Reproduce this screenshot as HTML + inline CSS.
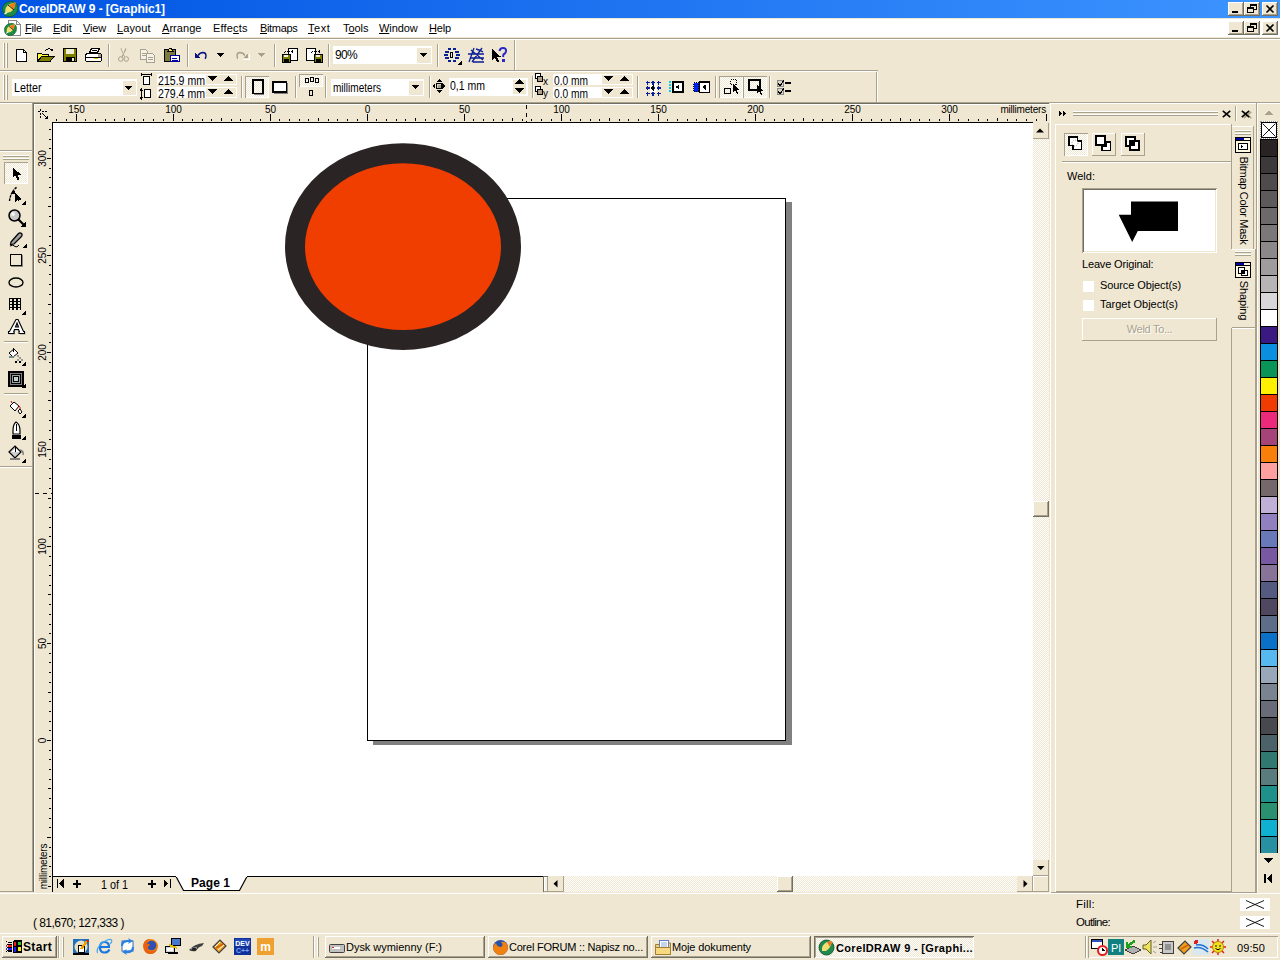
<!DOCTYPE html>
<html><head><meta charset="utf-8">
<style>
*{box-sizing:border-box;margin:0;padding:0}
html,body{width:1280px;height:960px;overflow:hidden;background:#EFE7D2;font-family:"Liberation Sans",sans-serif;font-size:11px;color:#000}
body{position:relative}
.a{position:absolute}
.t{position:absolute;white-space:nowrap;line-height:13px}
svg.a{overflow:visible}
.ul{text-decoration:underline;text-underline-offset:1px}
</style></head><body>

<div class="a" style="left:0px;top:0px;width:1280px;height:18px;background:linear-gradient(to right,#0054E3,#3D95FF);"></div>
<div class="t" style="left:19px;top:2px;color:#fff;font-weight:bold;font-size:12px;line-height:14px;letter-spacing:-0.085px">CorelDRAW 9 - [Graphic1]</div>
<div class="a" style="left:1228px;top:2px;width:16px;height:14px;background:#EFE7D2;box-shadow:inset -1px -1px #716F64,inset 1px 1px #fff,inset -2px -2px #A9A18B;"></div>
<div class="a" style="left:1232px;top:11px;width:6px;height:2px;background:#000;"></div>
<div class="a" style="left:1244px;top:2px;width:16px;height:14px;background:#EFE7D2;box-shadow:inset -1px -1px #716F64,inset 1px 1px #fff,inset -2px -2px #A9A18B;"></div>
<svg class="a" style="left:1244px;top:2px;" width="16" height="14" viewBox="0 0 16 14" shape-rendering="crispEdges"><rect x="6.5" y="2.5" width="6" height="5" fill="none" stroke="#000"/><rect x="6" y="2" width="7" height="2" fill="#000"/><rect x="3.5" y="5.5" width="6" height="5" fill="#EFE7D2" stroke="#000"/><rect x="3" y="5" width="7" height="2" fill="#000"/></svg>
<div class="a" style="left:1262px;top:2px;width:16px;height:14px;background:#EFE7D2;box-shadow:inset -1px -1px #716F64,inset 1px 1px #fff,inset -2px -2px #A9A18B;"></div>
<svg class="a" style="left:1262px;top:2px;" width="16" height="14" viewBox="0 0 16 14" shape-rendering="crispEdges"><path d="M4.5 3.5 L11.5 10.5 M11.5 3.5 L4.5 10.5" stroke="#000" stroke-width="1.6" fill="none" shape-rendering="auto"/></svg>
<div class="a" style="left:0px;top:18px;width:1280px;height:1px;background:#EFE7D2;"></div>
<div class="a" style="left:0px;top:19px;width:1280px;height:18px;background:#fff;"></div>
<div class="a" style="left:0px;top:37px;width:1280px;height:1px;background:#EFE7D2;"></div>
<div class="a" style="left:0px;top:38px;width:1280px;height:1px;background:#A9A18B;"></div>
<div class="a" style="left:0px;top:39px;width:1280px;height:1px;background:#fff;"></div>
<div class="a" style="left:1228px;top:21px;width:16px;height:14px;background:#EFE7D2;box-shadow:inset -1px -1px #716F64,inset 1px 1px #fff,inset -2px -2px #A9A18B;"></div>
<div class="a" style="left:1232px;top:30px;width:6px;height:2px;background:#000;"></div>
<div class="a" style="left:1244px;top:21px;width:16px;height:14px;background:#EFE7D2;box-shadow:inset -1px -1px #716F64,inset 1px 1px #fff,inset -2px -2px #A9A18B;"></div>
<svg class="a" style="left:1244px;top:21px;" width="16" height="14" viewBox="0 0 16 14" shape-rendering="crispEdges"><rect x="6.5" y="2.5" width="6" height="5" fill="none" stroke="#000"/><rect x="6" y="2" width="7" height="2" fill="#000"/><rect x="3.5" y="5.5" width="6" height="5" fill="#EFE7D2" stroke="#000"/><rect x="3" y="5" width="7" height="2" fill="#000"/></svg>
<div class="a" style="left:1262px;top:21px;width:16px;height:14px;background:#EFE7D2;box-shadow:inset -1px -1px #716F64,inset 1px 1px #fff,inset -2px -2px #A9A18B;"></div>
<svg class="a" style="left:1262px;top:21px;" width="16" height="14" viewBox="0 0 16 14" shape-rendering="crispEdges"><path d="M4.5 3.5 L11.5 10.5 M11.5 3.5 L4.5 10.5" stroke="#000" stroke-width="1.6" fill="none" shape-rendering="auto"/></svg>
<div class="t" style="left:25px;top:22px;;letter-spacing:-0.163px"><span class="ul">F</span>ile</div>
<div class="t" style="left:53px;top:22px;;letter-spacing:-0.092px"><span class="ul">E</span>dit</div>
<div class="t" style="left:83px;top:22px;;letter-spacing:-0.139px"><span class="ul">V</span>iew</div>
<div class="t" style="left:117px;top:22px;;letter-spacing:0.109px"><span class="ul">L</span>ayout</div>
<div class="t" style="left:162px;top:22px;;letter-spacing:0.051px"><span class="ul">A</span>rrange</div>
<div class="t" style="left:213px;top:22px;;letter-spacing:0.180px">Effe<span class="ul">c</span>ts</div>
<div class="t" style="left:260px;top:22px;;letter-spacing:-0.336px"><span class="ul">B</span>itmaps</div>
<div class="t" style="left:308px;top:22px;;letter-spacing:0.553px"><span class="ul">T</span>ext</div>
<div class="t" style="left:343px;top:22px;;letter-spacing:-0.077px">T<span class="ul">o</span>ols</div>
<div class="t" style="left:379px;top:22px;;letter-spacing:-0.073px"><span class="ul">W</span>indow</div>
<div class="t" style="left:429px;top:22px;;letter-spacing:-0.210px"><span class="ul">H</span>elp</div>
<svg class="a" style="left:2px;top:1px;" width="17" height="17" viewBox="0 0 17 17" shape-rendering="crispEdges"><g shape-rendering="auto"><path d="M8 0.5Q14 0 15.5 5Q16.5 11 12 14.5Q8 16.5 4 15Q0.5 13 0.5 8Q1 2 8 0.5Z" fill="#1E8C48" stroke="#0C5A28" stroke-width="0.8"/><path d="M3.5 12Q2.5 7 6 4Q9 2 13.5 1.5Q13 6 11 9Q8 12.5 3.5 12Z" fill="#F2E070"/><path d="M7 4Q10 2 13.5 1.5Q13 6 11 9Q10 6 7 4Z" fill="#F07818"/><path d="M6 4L12 9" stroke="#201000" stroke-width="0.9"/><path d="M2.5 13L5 11.5" stroke="#fff" stroke-width="1.2"/></g></svg>
<svg class="a" style="left:8px;top:20px;" width="13" height="16" viewBox="0 0 13 16" shape-rendering="crispEdges"><path d="M0.5 0.5H8.5L12.5 4.5V15.5H0.5Z" fill="#fff" stroke="#888"/><path d="M8.5 0.5V4.5H12.5" fill="none" stroke="#888"/></svg>
<svg class="a" style="left:4px;top:23px;" width="13" height="13" viewBox="0 0 13 13" shape-rendering="crispEdges"><g transform="scale(0.8)"><g shape-rendering="auto"><path d="M8 0.5Q14 0 15.5 5Q16.5 11 12 14.5Q8 16.5 4 15Q0.5 13 0.5 8Q1 2 8 0.5Z" fill="#1E8C48" stroke="#0C5A28" stroke-width="0.8"/><path d="M3.5 12Q2.5 7 6 4Q9 2 13.5 1.5Q13 6 11 9Q8 12.5 3.5 12Z" fill="#F2E070"/><path d="M7 4Q10 2 13.5 1.5Q13 6 11 9Q10 6 7 4Z" fill="#F07818"/><path d="M6 4L12 9" stroke="#201000" stroke-width="0.9"/><path d="M2.5 13L5 11.5" stroke="#fff" stroke-width="1.2"/></g></g></svg>
<div class="a" style="left:0px;top:70px;width:878px;height:1px;background:#A9A18B;"></div>
<div class="a" style="left:0px;top:71px;width:877px;height:1px;background:#fff;"></div>
<div class="a" style="left:0px;top:102px;width:1280px;height:1px;background:#A9A18B;"></div>
<div class="a" style="left:0px;top:103px;width:33px;height:1px;background:#fff;"></div>
<div class="a" style="left:3px;top:43px;width:1px;height:25px;background:#fff;"></div>
<div class="a" style="left:4px;top:43px;width:1px;height:25px;background:#A9A18B;"></div>
<div class="a" style="left:6px;top:43px;width:1px;height:25px;background:#fff;"></div>
<div class="a" style="left:7px;top:43px;width:1px;height:25px;background:#A9A18B;"></div>
<div class="a" style="left:3px;top:75px;width:1px;height:25px;background:#fff;"></div>
<div class="a" style="left:4px;top:75px;width:1px;height:25px;background:#A9A18B;"></div>
<div class="a" style="left:6px;top:75px;width:1px;height:25px;background:#fff;"></div>
<div class="a" style="left:7px;top:75px;width:1px;height:25px;background:#A9A18B;"></div>
<div class="a" style="left:514px;top:40px;width:1px;height:30px;background:#A9A18B;"></div>
<div class="a" style="left:515px;top:40px;width:1px;height:30px;background:#fff;"></div>
<div class="a" style="left:876px;top:72px;width:1px;height:30px;background:#A9A18B;"></div>
<div class="a" style="left:877px;top:72px;width:1px;height:30px;background:#fff;"></div>
<svg class="a" style="left:16px;top:49px;" width="12" height="14" viewBox="0 0 12 14" shape-rendering="crispEdges"><path d="M0.5 0.5H7.5L10.5 3.5V12.5H0.5Z" fill="#fff" stroke="#000"/><path d="M7.5 0.5V3.5H10.5" fill="none" stroke="#000"/></svg>
<svg class="a" style="left:37px;top:47px;" width="18" height="16" viewBox="0 0 18 16" shape-rendering="crispEdges"><path d="M8 4 Q11 0 15 3" fill="none" stroke="#000"/><path d="M13 4H16V1Z" fill="#000"/><path d="M0.5 6.5H4.5L5.5 7.5H11.5V14.5H0.5Z" fill="#FFFF40" stroke="#000"/><path d="M0.5 14.5L4.5 9.5H17L13 14.5Z" fill="#808000" stroke="#000"/></svg>
<svg class="a" style="left:63px;top:48px;" width="15" height="15" viewBox="0 0 15 15" shape-rendering="crispEdges"><rect x="0.5" y="0.5" width="13" height="13" fill="#808000" stroke="#000"/><rect x="3" y="1" width="8" height="5" fill="#F0EED8"/><rect x="3" y="9" width="9" height="5" fill="#000"/><rect x="9" y="10" width="2" height="3" fill="#F0EED8"/></svg>
<svg class="a" style="left:85px;top:48px;" width="18" height="15" viewBox="0 0 18 15" shape-rendering="crispEdges"><path d="M4.5 4.5L6.5 0.5H14.5L12.5 4.5Z" fill="#fff" stroke="#000"/><path d="M7 2H12" stroke="#000"/><path d="M1.5 5.5H15.5L16.5 7.5V12.5L15.5 13.5H1.5L0.5 12.5V7.5Z" fill="#fff" stroke="#000"/><path d="M1 9.5H16" stroke="#000"/><rect x="9" y="10" width="4" height="1" fill="#E0C000"/><rect x="13" y="6" width="3" height="3" fill="#A9A18B"/></svg>
<div class="a" style="left:108px;top:44px;width:1px;height:23px;background:#A9A18B;"></div>
<div class="a" style="left:109px;top:44px;width:1px;height:23px;background:#fff;"></div>
<svg class="a" style="left:118px;top:48px;" width="12" height="15" viewBox="0 0 12 15" shape-rendering="crispEdges"><path d="M3 0.5L7 9M8 0.5L4 9" stroke="#A9A18B" fill="none" stroke-width="1.2" shape-rendering="auto"/><circle cx="2.8" cy="11" r="2.3" fill="none" stroke="#A9A18B" shape-rendering="auto"/><circle cx="8.2" cy="11" r="2.3" fill="none" stroke="#A9A18B" shape-rendering="auto"/><path d="M4 1L7.5 9" stroke="#fff" fill="none" shape-rendering="auto" opacity="0.6"/></svg>
<svg class="a" style="left:140px;top:49px;" width="17" height="14" viewBox="0 0 17 14" shape-rendering="crispEdges"><path d="M0.5 0.5H5.5L7.5 2.5V10.5H0.5Z" fill="#F4F2E8" stroke="#A9A18B"/><path d="M6.5 4.5H12.5L14.5 6.5V13.5H6.5Z" fill="#F4F2E8" stroke="#A9A18B"/><path d="M2 4H6M2 6H6M8 8H13M8 10H13" stroke="#A9A18B"/></svg>
<svg class="a" style="left:164px;top:48px;" width="17" height="15" viewBox="0 0 17 15" shape-rendering="crispEdges"><rect x="0.5" y="1.5" width="11" height="12" fill="#7F7A40" stroke="#000"/><path d="M3.5 3.5L5.5 0.5H7L9 3.5Z" fill="#FFE060" stroke="#000"/><rect x="6.5" y="7.5" width="9" height="6" fill="#fff" stroke="#0000A0"/><path d="M8 10H13M8 12H14" stroke="#0000A0"/></svg>
<div class="a" style="left:187px;top:44px;width:1px;height:23px;background:#A9A18B;"></div>
<div class="a" style="left:188px;top:44px;width:1px;height:23px;background:#fff;"></div>
<svg class="a" style="left:194px;top:51px;" width="14" height="9" viewBox="0 0 14 9" shape-rendering="crispEdges"><path d="M4 4.5 Q6 1.5 9 1.5 Q12 1.8 12 4.5 Q12 6.5 11 7.8" fill="none" stroke="#0A1480" stroke-width="1.4" shape-rendering="auto"/><path d="M1 2V7H6Z" fill="#0A1480"/></svg>
<svg class="a" style="left:217px;top:53px;" width="8" height="5" viewBox="0 0 8 5" shape-rendering="crispEdges"><path d="M0 0H7L3.5 4Z" fill="#000"/></svg>
<svg class="a" style="left:235px;top:51px;" width="15" height="10" viewBox="0 0 15 10" shape-rendering="crispEdges"><path d="M10 4.5 Q8 1.5 5 1.5 Q2 1.8 2 4.5 Q2 6.5 3 7.8" fill="none" stroke="#A9A18B" stroke-width="1.4" shape-rendering="auto"/><path d="M3.5 8.5Q3 7.5 3 6.5" stroke="#fff" stroke-width="1" fill="none"/><path d="M13 2V7H8Z" fill="#A9A18B"/><path d="M8 8H14V3" stroke="#fff" fill="none"/></svg>
<svg class="a" style="left:258px;top:53px;" width="8" height="5" viewBox="0 0 8 5" shape-rendering="crispEdges"><path d="M0 0H7L3.5 4Z" fill="#A9A18B"/></svg>
<div class="a" style="left:274px;top:44px;width:1px;height:23px;background:#A9A18B;"></div>
<div class="a" style="left:275px;top:44px;width:1px;height:23px;background:#fff;"></div>
<svg class="a" style="left:281px;top:47px;" width="18" height="17" viewBox="0 0 18 17" shape-rendering="crispEdges"><rect x="7.5" y="1.5" width="9" height="12" fill="#fff" stroke="#000"/><path d="M3 6V4.5H9" fill="none" stroke="#000" stroke-dasharray="1 1"/><path d="M9 5L12 3V6Z" fill="#000"/><rect x="1" y="7.5" width="8.5" height="8" fill="#808000" stroke="#000"/><rect x="3" y="8" width="4" height="2" fill="#F0EED8"/><rect x="3" y="12" width="5" height="4" fill="#000"/></svg>
<svg class="a" style="left:305px;top:47px;" width="18" height="17" viewBox="0 0 18 17" shape-rendering="crispEdges"><rect x="1.5" y="1.5" width="9" height="12" fill="#fff" stroke="#000"/><path d="M6 6V4.5H12" fill="none" stroke="#000" stroke-dasharray="1 1"/><path d="M12 5L15 3V6Z" fill="#000"/><rect x="9" y="7.5" width="8" height="8" fill="#808000" stroke="#000"/><rect x="11" y="8" width="4" height="2" fill="#F0EED8"/><rect x="11" y="12" width="5" height="4" fill="#000"/></svg>
<div class="a" style="left:328px;top:44px;width:1px;height:23px;background:#A9A18B;"></div>
<div class="a" style="left:329px;top:44px;width:1px;height:23px;background:#fff;"></div>
<div class="a" style="left:333px;top:46px;width:99px;height:18px;background:#fff;"></div>
<div class="a" style="left:417px;top:48px;width:14px;height:15px;background:#EFE7D2;"></div>
<svg class="a" style="left:420px;top:53px;" width="8" height="5" viewBox="0 0 8 5" shape-rendering="crispEdges"><path d="M0 0H7L3.5 4Z" fill="#000"/></svg>
<div class="t" style="left:335px;top:49px;font-size:12px;letter-spacing:-0.677px">90%</div>
<div class="a" style="left:437px;top:44px;width:1px;height:23px;background:#A9A18B;"></div>
<div class="a" style="left:438px;top:44px;width:1px;height:23px;background:#fff;"></div>
<svg class="a" style="left:444px;top:48px;" width="19" height="17" viewBox="0 0 19 17" shape-rendering="crispEdges"><g fill="#0A1E96"><rect x="4" y="0" width="3" height="2"/><rect x="9" y="0" width="3" height="2"/><rect x="1" y="3" width="4" height="2"/><rect x="11" y="3" width="4" height="2"/><rect x="0" y="6" width="4" height="2"/><rect x="12" y="6" width="4" height="2"/><rect x="1" y="9" width="4" height="2"/><rect x="11" y="9" width="4" height="2"/><rect x="4" y="12" width="3" height="2"/><rect x="9" y="12" width="3" height="2"/></g><path d="M6 5 Q8 3 9 5 L8 10 Q6 10 6 8Z" fill="none" stroke="#000"/><path d="M18 12V17H13Z" fill="#000"/></svg>
<svg class="a" style="left:468px;top:48px;" width="17" height="15" viewBox="0 0 17 15" shape-rendering="crispEdges"><g stroke="#0A1E96" fill="none" stroke-width="1.3" shape-rendering="auto"><path d="M0 6H16M2 10H16M5 14H16M6 0L1 14M14 0L4 14M3 2L15 12M8 1Q12 2 15 4"/></g></svg>
<svg class="a" style="left:491px;top:47px;" width="18" height="17" viewBox="0 0 18 17" shape-rendering="crispEdges"><path d="M0.5 1.5V13.5L3.5 10.5L6 15.5L8 14.5L5.5 9.5H9.5Z" fill="#000"/><path d="M8.5 4 Q9 1 12 1 Q15.5 1 15 4.5 Q14.5 6.5 12.5 7.5 L12 10" fill="none" stroke="#2828C8" stroke-width="2" shape-rendering="auto"/><rect x="11" y="12" width="2.5" height="2.5" fill="#2828C8"/></svg>
<div class="a" style="left:12px;top:79px;width:125px;height:17px;background:#fff;"></div>
<div class="a" style="left:123px;top:81px;width:13px;height:14px;background:#EFE7D2;"></div>
<svg class="a" style="left:125px;top:86px;" width="8" height="5" viewBox="0 0 8 5" shape-rendering="crispEdges"><path d="M0 0H7L3.5 4Z" fill="#000"/></svg>
<div class="t" style="left:14px;top:82px;font-size:12px;transform-origin:0 0;transform:scaleX(0.8961)">Letter</div>
<svg class="a" style="left:140px;top:72px;" width="13" height="28" viewBox="0 0 13 28" shape-rendering="crispEdges"><path d="M1.5 0.5V3.5M11.5 0.5V3.5M1 2H12" stroke="#000" fill="none"/><rect x="3.5" y="4.5" width="6" height="8" fill="#fff" stroke="#000" stroke-width="1.5"/><path d="M1.5 18V26" stroke="#000" fill="none"/><path d="M-0.5 19H3.5L1.5 16Z M-0.5 25H3.5L1.5 28Z" fill="#000"/><rect x="4.5" y="17.5" width="6" height="8" fill="#fff" stroke="#000" stroke-width="1.5"/></svg>
<div class="a" style="left:157px;top:74px;width:80px;height:11px;background:#fff;"></div>
<div class="a" style="left:206px;top:75px;width:30px;height:9px;background:#EFE7D2;"></div>
<div class="t" style="left:158px;top:75px;font-size:12px;line-height:13px;transform-origin:0 0;transform:scaleX(0.8808)">215.9 mm</div>
<svg class="a" style="left:208px;top:76px;" width="10" height="5" viewBox="0 0 10 5" shape-rendering="crispEdges"><path d="M0 0H9L4.5 5Z" fill="#000"/></svg>
<svg class="a" style="left:224px;top:76px;" width="10" height="5" viewBox="0 0 10 5" shape-rendering="crispEdges"><path d="M0 5H9L4.5 0Z" fill="#000"/></svg>
<div class="a" style="left:157px;top:87px;width:80px;height:11px;background:#fff;"></div>
<div class="a" style="left:206px;top:88px;width:30px;height:9px;background:#EFE7D2;"></div>
<div class="t" style="left:158px;top:88px;font-size:12px;line-height:13px;transform-origin:0 0;transform:scaleX(0.8808)">279.4 mm</div>
<svg class="a" style="left:208px;top:89px;" width="10" height="5" viewBox="0 0 10 5" shape-rendering="crispEdges"><path d="M0 0H9L4.5 5Z" fill="#000"/></svg>
<svg class="a" style="left:224px;top:89px;" width="10" height="5" viewBox="0 0 10 5" shape-rendering="crispEdges"><path d="M0 5H9L4.5 0Z" fill="#000"/></svg>
<div class="a" style="left:241px;top:76px;width:1px;height:22px;background:#A9A18B;"></div>
<div class="a" style="left:242px;top:76px;width:1px;height:22px;background:#fff;"></div>
<div class="a" style="left:245px;top:76px;width:24px;height:22px;background-color:#fff;background-image:conic-gradient(#EFE7D2 25%,#fff 0 50%,#EFE7D2 0 75%,#fff 0);background-size:2px 2px;box-shadow:inset 1px 1px #A9A18B,inset -1px -1px #fff"></div>
<svg class="a" style="left:252px;top:79px;" width="13" height="17" viewBox="0 0 13 17" shape-rendering="crispEdges"><path d="M11.5 2V15.5H2" fill="none" stroke="#808080" stroke-width="1"/><rect x="0.75" y="0.75" width="10" height="13.5" fill="none" stroke="#000" stroke-width="1.5"/></svg>
<svg class="a" style="left:272px;top:81px;" width="17" height="13" viewBox="0 0 17 13" shape-rendering="crispEdges"><path d="M15.5 2V12.5H2" fill="none" stroke="#808080" stroke-width="1"/><rect x="0.75" y="0.75" width="13.5" height="10" fill="#fff" stroke="#000" stroke-width="1.5"/></svg>
<div class="a" style="left:295px;top:76px;width:1px;height:22px;background:#A9A18B;"></div>
<div class="a" style="left:296px;top:76px;width:1px;height:22px;background:#fff;"></div>
<div class="a" style="left:299px;top:74px;width:24px;height:13px;background-color:#fff;background-image:conic-gradient(#EFE7D2 25%,#fff 0 50%,#EFE7D2 0 75%,#fff 0);background-size:2px 2px;box-shadow:inset 1px 1px #A9A18B,inset -1px -1px #fff"></div>
<svg class="a" style="left:305px;top:77px;" width="15" height="8" viewBox="0 0 15 8" shape-rendering="crispEdges"><rect x="0.5" y="1.5" width="3" height="4" fill="none" stroke="#000"/><rect x="5.5" y="0.5" width="3" height="4" fill="none" stroke="#000"/><rect x="10.5" y="1.5" width="3" height="4" fill="none" stroke="#000"/></svg>
<svg class="a" style="left:309px;top:90px;" width="5" height="6" viewBox="0 0 5 6" shape-rendering="crispEdges"><rect x="0.5" y="0.5" width="3" height="4.5" fill="none" stroke="#000"/></svg>
<div class="a" style="left:325px;top:76px;width:1px;height:22px;background:#A9A18B;"></div>
<div class="a" style="left:326px;top:76px;width:1px;height:22px;background:#fff;"></div>
<div class="a" style="left:331px;top:79px;width:93px;height:17px;background:#fff;"></div>
<div class="a" style="left:409px;top:81px;width:14px;height:14px;background:#EFE7D2;"></div>
<svg class="a" style="left:412px;top:85px;" width="8" height="4" viewBox="0 0 8 4" shape-rendering="crispEdges"><path d="M0 0H7L3.5 4Z" fill="#000"/></svg>
<div class="t" style="left:333px;top:82px;font-size:12px;transform-origin:0 0;transform:scaleX(0.8371)">millimeters</div>
<div class="a" style="left:429px;top:76px;width:1px;height:22px;background:#A9A18B;"></div>
<div class="a" style="left:430px;top:76px;width:1px;height:22px;background:#fff;"></div>
<svg class="a" style="left:432px;top:79px;" width="14" height="15" viewBox="0 0 14 15" shape-rendering="crispEdges"><path d="M7 0L10 3H4Z M7 14L10 11H4Z M0 7L3 4V10Z M13 7L10 4V10Z" fill="#000"/><rect x="4.5" y="4.5" width="5" height="5" fill="#D8D4C0" stroke="#000"/><rect x="6" y="6" width="3" height="3" fill="#A9A18B"/></svg>
<div class="a" style="left:449px;top:78px;width:79px;height:18px;background:#fff;"></div>
<div class="a" style="left:513px;top:80px;width:13px;height:14px;background:#EFE7D2;"></div>
<div class="t" style="left:450px;top:79px;font-size:12px;line-height:14px;transform-origin:0 0;transform:scaleX(0.8747)">0,1 mm</div>
<svg class="a" style="left:515px;top:79px;" width="10" height="6" viewBox="0 0 10 6" shape-rendering="crispEdges"><path d="M0 5H9L4.5 0Z" fill="#000"/></svg>
<svg class="a" style="left:515px;top:88px;" width="10" height="6" viewBox="0 0 10 6" shape-rendering="crispEdges"><path d="M0 0H9L4.5 5Z" fill="#000"/></svg>
<div class="a" style="left:532px;top:76px;width:1px;height:22px;background:#A9A18B;"></div>
<div class="a" style="left:533px;top:76px;width:1px;height:22px;background:#fff;"></div>
<svg class="a" style="left:535px;top:73px;" width="14" height="13" viewBox="0 0 14 13" shape-rendering="crispEdges"><rect x="0.5" y="0.5" width="5" height="5" fill="#fff" stroke="#000"/><rect x="2.5" y="3" width="5" height="5" fill="#A9A18B" stroke="#000"/></svg>
<div class="t" style="left:543px;top:76px;font-size:10px;line-height:11px">x</div>
<div class="a" style="left:553px;top:74px;width:80px;height:11px;background:#fff;"></div>
<div class="a" style="left:602px;top:75px;width:30px;height:9px;background:#EFE7D2;"></div>
<div class="t" style="left:554px;top:75px;font-size:12px;line-height:13px;transform-origin:0 0;transform:scaleX(0.8497)">0.0 mm</div>
<svg class="a" style="left:604px;top:76px;" width="10" height="5" viewBox="0 0 10 5" shape-rendering="crispEdges"><path d="M0 0H9L4.5 5Z" fill="#000"/></svg>
<svg class="a" style="left:620px;top:76px;" width="10" height="5" viewBox="0 0 10 5" shape-rendering="crispEdges"><path d="M0 5H9L4.5 0Z" fill="#000"/></svg>
<svg class="a" style="left:535px;top:86px;" width="14" height="13" viewBox="0 0 14 13" shape-rendering="crispEdges"><rect x="0.5" y="0.5" width="5" height="5" fill="#fff" stroke="#000"/><rect x="2.5" y="3" width="5" height="5" fill="#A9A18B" stroke="#000"/></svg>
<div class="t" style="left:543px;top:88px;font-size:10px;line-height:11px">y</div>
<div class="a" style="left:553px;top:87px;width:80px;height:11px;background:#fff;"></div>
<div class="a" style="left:602px;top:88px;width:30px;height:9px;background:#EFE7D2;"></div>
<div class="t" style="left:554px;top:88px;font-size:12px;line-height:13px;transform-origin:0 0;transform:scaleX(0.8497)">0.0 mm</div>
<svg class="a" style="left:604px;top:89px;" width="10" height="5" viewBox="0 0 10 5" shape-rendering="crispEdges"><path d="M0 0H9L4.5 5Z" fill="#000"/></svg>
<svg class="a" style="left:620px;top:89px;" width="10" height="5" viewBox="0 0 10 5" shape-rendering="crispEdges"><path d="M0 5H9L4.5 0Z" fill="#000"/></svg>
<div class="a" style="left:637px;top:76px;width:1px;height:22px;background:#A9A18B;"></div>
<div class="a" style="left:638px;top:76px;width:1px;height:22px;background:#fff;"></div>
<svg class="a" style="left:645px;top:80px;" width="16" height="16" viewBox="0 0 16 16" shape-rendering="crispEdges"><rect x="5" y="4" width="7" height="8" fill="#fff"/><path d="M2.5 0.5V4.5M0.5 2.5H4.5" stroke="#0A1E96" stroke-width="1.3"/><path d="M2.5 6V10M0.5 8H4.5" stroke="#0A1E96" stroke-width="1.3"/><path d="M2.5 11.5V15.5M0.5 13.5H4.5" stroke="#0A1E96" stroke-width="1.3"/><path d="M8 0.5V4.5M6 2.5H10" stroke="#0A1E96" stroke-width="1.3"/><path d="M8 6V10M6 8H10" stroke="#0A1E96" stroke-width="1.3"/><path d="M8 11.5V15.5M6 13.5H10" stroke="#0A1E96" stroke-width="1.3"/><path d="M13.5 0.5V4.5M11.5 2.5H15.5" stroke="#0A1E96" stroke-width="1.3"/><path d="M13.5 6V10M11.5 8H15.5" stroke="#0A1E96" stroke-width="1.3"/><path d="M13.5 11.5V15.5M11.5 13.5H15.5" stroke="#0A1E96" stroke-width="1.3"/><path d="M5 8L9 5V11Z" fill="#000"/><path d="M7 8L8 7V9Z" fill="#E0E000"/></svg>
<svg class="a" style="left:669px;top:81px;" width="15" height="12" viewBox="0 0 15 12" shape-rendering="crispEdges"><path d="M1 0V12" stroke="#00D0F0" stroke-width="2" stroke-dasharray="2 1"/><rect x="4" y="1" width="10" height="10" fill="#fff" stroke="#000" stroke-width="1.5"/><path d="M6.5 6L10 3.5V8.5Z" fill="#000"/></svg>
<svg class="a" style="left:693px;top:81px;" width="17" height="12" viewBox="0 0 17 12" shape-rendering="crispEdges"><rect x="0.5" y="1.5" width="5" height="9" fill="#0020F0" stroke="#000" stroke-dasharray="1 1"/><rect x="6.5" y="0.75" width="10" height="10.5" fill="#fff" stroke="#000" stroke-width="1.5"/><path d="M9 6L12.5 3.5V8.5Z" fill="#000"/></svg>
<div class="a" style="left:715px;top:76px;width:1px;height:22px;background:#A9A18B;"></div>
<div class="a" style="left:716px;top:76px;width:1px;height:22px;background:#fff;"></div>
<div class="a" style="left:719px;top:76px;width:24px;height:22px;background-color:#fff;background-image:conic-gradient(#EFE7D2 25%,#fff 0 50%,#EFE7D2 0 75%,#fff 0);background-size:2px 2px;box-shadow:inset 1px 1px #A9A18B,inset -1px -1px #fff"></div>
<div class="a" style="left:743px;top:76px;width:24px;height:22px;background-color:#fff;background-image:conic-gradient(#EFE7D2 25%,#fff 0 50%,#EFE7D2 0 75%,#fff 0);background-size:2px 2px;box-shadow:inset 1px 1px #A9A18B,inset -1px -1px #fff"></div>
<svg class="a" style="left:724px;top:79px;" width="16" height="16" viewBox="0 0 16 16" shape-rendering="crispEdges"><rect x="6.5" y="0.5" width="6" height="5" fill="none" stroke="#000" stroke-dasharray="1 1"/><rect x="0.5" y="9.5" width="6" height="5" fill="none" stroke="#000"/><path d="M9 4V13L11 11L13 15L14 14L12.5 10.5H15Z" fill="#000"/></svg>
<svg class="a" style="left:748px;top:79px;" width="16" height="17" viewBox="0 0 16 17" shape-rendering="crispEdges"><rect x="1" y="1" width="11" height="10" fill="none" stroke="#000" stroke-width="1.3"/><path d="M0 0h2v2H0zM11 0h2v2h-2zM0 10h2v2H0z" fill="#000"/><path d="M9 5V14L11 12L13 16L14 15L12.5 11.5H15Z" fill="#000"/></svg>
<div class="a" style="left:769px;top:76px;width:1px;height:22px;background:#A9A18B;"></div>
<div class="a" style="left:770px;top:76px;width:1px;height:22px;background:#fff;"></div>
<svg class="a" style="left:777px;top:80px;" width="15" height="15" viewBox="0 0 15 15" shape-rendering="crispEdges"><rect x="0.5" y="0.5" width="6" height="6" fill="#D8D4C0" stroke="#888"/><rect x="0.5" y="8.5" width="6" height="6" fill="#D8D4C0" stroke="#888"/><path d="M1 3L3 6L7 0M1 11L3 14L7 8" stroke="#000" fill="none" stroke-width="1.3"/><path d="M8 3H14M8 11H14" stroke="#000" stroke-width="1.5"/></svg>
<div class="a" style="left:32px;top:103px;width:1px;height:789px;background:#A9A18B;"></div>
<div class="a" style="left:0px;top:891px;width:33px;height:1px;background:#A9A18B;"></div>
<div class="a" style="left:0px;top:150px;width:32px;height:1px;background:#A9A18B;"></div>
<div class="a" style="left:0px;top:151px;width:32px;height:1px;background:#fff;"></div>
<div class="a" style="left:0px;top:466px;width:32px;height:1px;background:#A9A18B;"></div>
<div class="a" style="left:0px;top:467px;width:32px;height:1px;background:#fff;"></div>
<div class="a" style="left:3px;top:155px;width:26px;height:1px;background:#fff;"></div>
<div class="a" style="left:3px;top:156px;width:26px;height:1px;background:#A9A18B;"></div>
<div class="a" style="left:3px;top:158px;width:26px;height:1px;background:#fff;"></div>
<div class="a" style="left:3px;top:159px;width:26px;height:1px;background:#A9A18B;"></div>
<div class="a" style="left:4px;top:162px;width:24px;height:22px;background-color:#fff;background-image:conic-gradient(#EFE7D2 25%,#fff 0 50%,#EFE7D2 0 75%,#fff 0);background-size:2px 2px;box-shadow:inset 1px 1px #A9A18B,inset -1px -1px #fff"></div>
<svg class="a" style="left:12px;top:167px;" width="10" height="14" viewBox="0 0 10 14" shape-rendering="crispEdges"><path d="M0.5 0.5V11L3 8.5L5.5 13L7.5 12L5 7.5H9Z" fill="#000"/></svg>
<svg class="a" style="left:8px;top:186px;" width="20" height="20" viewBox="0 0 20 20" shape-rendering="crispEdges"><path d="M1.5 15 Q2.5 6 9 1" fill="none" stroke="#000" stroke-width="1.4" stroke-dasharray="2.5 0.8" shape-rendering="auto"/><rect x="4" y="5" width="3" height="3" fill="#000"/><path d="M7 7V16L9 14L10.5 15.5H11V13.5H13L13.5 13Z" fill="#000"/><path d="M18 14V19H13Z" fill="#000"/></svg>
<svg class="a" style="left:8px;top:209px;" width="19" height="20" viewBox="0 0 19 20" shape-rendering="crispEdges"><circle cx="6.5" cy="6.5" r="5.5" fill="#C8C8C8" stroke="#000" stroke-width="1.5" shape-rendering="auto"/><circle cx="5" cy="5" r="2" fill="#fff" opacity=".8" shape-rendering="auto"/><path d="M10.5 10.5L16 16" stroke="#000" stroke-width="2.2" shape-rendering="auto"/><path d="M17.5 17.5H12.5L17.5 12.5Z" fill="#000"/></svg>
<svg class="a" style="left:9px;top:232px;" width="19" height="17" viewBox="0 0 19 17" shape-rendering="crispEdges"><path d="M2 10L9 2Q11 0 12.5 1.5Q14 3 12 5L5 12L1.5 12.5Z" fill="#A0A0A0" stroke="#000" stroke-width="1.2" shape-rendering="auto"/><path d="M1 14Q4 12 6 14.5Q8 16 10 13" fill="none" stroke="#000" shape-rendering="auto"/><path d="M18 11V16H13Z" fill="#000"/></svg>
<svg class="a" style="left:10px;top:254px;" width="14" height="14" viewBox="0 0 14 14" shape-rendering="crispEdges"><path d="M12.5 1V12.5H1" fill="none" stroke="#8A8A80" stroke-width="1"/><rect x="0.6" y="0.6" width="11" height="11" fill="none" stroke="#000" stroke-width="1.2"/></svg>
<svg class="a" style="left:8px;top:277px;" width="17" height="12" viewBox="0 0 17 12" shape-rendering="crispEdges"><ellipse cx="8" cy="5.5" rx="7" ry="4.5" fill="none" stroke="#000" stroke-width="1.4" shape-rendering="auto"/></svg>
<svg class="a" style="left:8px;top:297px;" width="19" height="19" viewBox="0 0 19 19" shape-rendering="crispEdges"><rect x="1" y="1" width="12" height="12" fill="#000"/><rect x="2" y="2" width="2" height="2" fill="#F0EED8"/><rect x="2" y="5" width="2" height="2" fill="#F0EED8"/><rect x="2" y="8" width="2" height="2" fill="#F0EED8"/><rect x="2" y="11" width="2" height="2" fill="#F0EED8"/><rect x="6" y="2" width="2" height="2" fill="#F0EED8"/><rect x="6" y="5" width="2" height="2" fill="#F0EED8"/><rect x="6" y="8" width="2" height="2" fill="#F0EED8"/><rect x="6" y="11" width="2" height="2" fill="#F0EED8"/><rect x="10" y="2" width="2" height="2" fill="#F0EED8"/><rect x="10" y="5" width="2" height="2" fill="#F0EED8"/><rect x="10" y="8" width="2" height="2" fill="#F0EED8"/><rect x="10" y="11" width="2" height="2" fill="#F0EED8"/><path d="M18 13V18H13Z" fill="#000"/></svg>
<svg class="a" style="left:9px;top:319px;" width="17" height="16" viewBox="0 0 17 16" shape-rendering="crispEdges"><g shape-rendering="auto"><path d="M8 1.5H10L15.5 13.5H16.5V15.5H11V13.5H11.3L10.5 11.5H6.5L5.8 13.5H6V15.5H0.5V13.5H1.5Z" fill="#708080" opacity=".6"/><path d="M7 0.5H9L14.5 12.5H15.5V14.5H10V12.5H10.3L9.5 10.5H5.5L4.8 12.5H5V14.5H-0.5V12.5H0.5Z M8 4L9.5 8H6.5Z" fill="#fff" fill-rule="evenodd" stroke="#000" stroke-width="1.1"/></g></svg>
<div class="a" style="left:4px;top:341px;width:24px;height:1px;background:#A9A18B;"></div>
<div class="a" style="left:4px;top:342px;width:24px;height:1px;background:#fff;"></div>
<svg class="a" style="left:8px;top:348px;" width="19" height="19" viewBox="0 0 19 19" shape-rendering="crispEdges"><path d="M1 5L6 1L10 5L5 9Z" fill="#fff" stroke="#000" shape-rendering="auto"/><path d="M5 0V4" stroke="#000"/><path d="M1 9H6" stroke="#6E8A8A" stroke-width="1.5"/><g fill="#999"><rect x="9" y="7" width="2" height="2"/><rect x="11" y="9" width="2" height="2"/><rect x="9" y="11" width="2" height="2"/><rect x="13" y="11" width="2" height="2"/></g><g fill="#000"><rect x="7" y="13" width="2" height="2"/><rect x="11" y="13" width="2" height="2"/></g><path d="M18 13V18H13Z" fill="#000"/></svg>
<svg class="a" style="left:8px;top:371px;" width="19" height="18" viewBox="0 0 19 18" shape-rendering="crispEdges"><rect x="0" y="0" width="16" height="16" fill="#000"/><rect x="2" y="2" width="12" height="12" fill="#808080"/><rect x="3" y="3" width="10" height="10" fill="#000"/><rect x="4" y="4" width="8" height="8" fill="#A0A0A0"/><rect x="5" y="5" width="6" height="6" fill="#000"/><rect x="6" y="6" width="4" height="4" fill="#C0D0D0"/><path d="M18 12V17H13Z" fill="#000"/></svg>
<div class="a" style="left:4px;top:393px;width:24px;height:1px;background:#A9A18B;"></div>
<div class="a" style="left:4px;top:394px;width:24px;height:1px;background:#fff;"></div>
<svg class="a" style="left:9px;top:401px;" width="18" height="18" viewBox="0 0 18 18" shape-rendering="crispEdges"><path d="M1 5L5 1L10 5L6 10Z" fill="#fff" stroke="#000" shape-rendering="auto"/><path d="M3 2L2 0M9 4Q12 6 11 9" stroke="#C00000" fill="none" shape-rendering="auto"/><path d="M9 10L11 8L13 11L11 13Z" fill="#fff" stroke="#000" shape-rendering="auto"/><path d="M17 12V17H12Z" fill="#000"/></svg>
<svg class="a" style="left:11px;top:422px;" width="16" height="19" viewBox="0 0 16 19" shape-rendering="crispEdges"><path d="M5 0Q9 2 9 9V12H2V9Q2 2 5 0Z" fill="#fff" stroke="#000" stroke-width="1.2" shape-rendering="auto"/><path d="M5.5 2V9" stroke="#000"/><rect x="1" y="13" width="9" height="4" fill="#000"/><path d="M15 13V18H10Z" fill="#000"/></svg>
<svg class="a" style="left:8px;top:445px;" width="19" height="19" viewBox="0 0 19 19" shape-rendering="crispEdges"><path d="M1 7L7 1L13 7L7 13Z" fill="#D0D0D0" stroke="#000" stroke-width="1.2" shape-rendering="auto"/><path d="M3 7L7 3L11 7" fill="#fff"/><path d="M7 1V7" stroke="#000"/><path d="M12 5Q16 6 15 10" fill="none" stroke="#808080" stroke-width="1.5" shape-rendering="auto"/><path d="M2 14H12" stroke="#808080" stroke-width="1.5"/><path d="M18 13V18H13Z" fill="#000"/></svg>
<div class="a" style="left:33px;top:103px;width:1016px;height:1px;background:#716F64;"></div>
<div class="a" style="left:33px;top:103px;width:1px;height:789px;background:#716F64;"></div>
<div class="a" style="left:34px;top:104px;width:1015px;height:1px;background:#fff;"></div>
<div class="a" style="left:34px;top:104px;width:1px;height:788px;background:#fff;"></div>
<div class="a" style="left:1050px;top:103px;width:1px;height:790px;background:#fff;"></div>
<div class="a" style="left:53px;top:123px;width:980px;height:753px;background:#fff;"></div>
<div class="a" style="left:52px;top:122px;width:981px;height:1px;background:#000;"></div>
<div class="a" style="left:52px;top:122px;width:1px;height:770px;background:#000;"></div>
<div class="a" style="left:52px;top:876px;width:492px;height:1px;background:#000;"></div>
<svg class="a" style="left:0;top:0" width="1280" height="960" shape-rendering="crispEdges"><g fill="#000"><rect x="56" y="119" width="1" height="2"/><rect x="66" y="119" width="1" height="2"/><rect x="76" y="114" width="1" height="7"/><rect x="85" y="119" width="1" height="2"/><rect x="95" y="119" width="1" height="2"/><rect x="105" y="119" width="1" height="2"/><rect x="114" y="119" width="1" height="2"/><rect x="124" y="118" width="1" height="3"/><rect x="134" y="119" width="1" height="2"/><rect x="143" y="119" width="1" height="2"/><rect x="153" y="119" width="1" height="2"/><rect x="163" y="119" width="1" height="2"/><rect x="173" y="114" width="1" height="7"/><rect x="182" y="119" width="1" height="2"/><rect x="192" y="119" width="1" height="2"/><rect x="202" y="119" width="1" height="2"/><rect x="211" y="119" width="1" height="2"/><rect x="221" y="118" width="1" height="3"/><rect x="231" y="119" width="1" height="2"/><rect x="240" y="119" width="1" height="2"/><rect x="250" y="119" width="1" height="2"/><rect x="260" y="119" width="1" height="2"/><rect x="270" y="114" width="1" height="7"/><rect x="279" y="119" width="1" height="2"/><rect x="289" y="119" width="1" height="2"/><rect x="299" y="119" width="1" height="2"/><rect x="308" y="119" width="1" height="2"/><rect x="318" y="118" width="1" height="3"/><rect x="328" y="119" width="1" height="2"/><rect x="337" y="119" width="1" height="2"/><rect x="347" y="119" width="1" height="2"/><rect x="357" y="119" width="1" height="2"/><rect x="367" y="114" width="1" height="7"/><rect x="376" y="119" width="1" height="2"/><rect x="386" y="119" width="1" height="2"/><rect x="396" y="119" width="1" height="2"/><rect x="405" y="119" width="1" height="2"/><rect x="415" y="118" width="1" height="3"/><rect x="425" y="119" width="1" height="2"/><rect x="434" y="119" width="1" height="2"/><rect x="444" y="119" width="1" height="2"/><rect x="454" y="119" width="1" height="2"/><rect x="464" y="114" width="1" height="7"/><rect x="473" y="119" width="1" height="2"/><rect x="483" y="119" width="1" height="2"/><rect x="493" y="119" width="1" height="2"/><rect x="502" y="119" width="1" height="2"/><rect x="512" y="118" width="1" height="3"/><rect x="522" y="119" width="1" height="2"/><rect x="531" y="119" width="1" height="2"/><rect x="541" y="119" width="1" height="2"/><rect x="551" y="119" width="1" height="2"/><rect x="561" y="114" width="1" height="7"/><rect x="570" y="119" width="1" height="2"/><rect x="580" y="119" width="1" height="2"/><rect x="590" y="119" width="1" height="2"/><rect x="599" y="119" width="1" height="2"/><rect x="609" y="118" width="1" height="3"/><rect x="619" y="119" width="1" height="2"/><rect x="628" y="119" width="1" height="2"/><rect x="638" y="119" width="1" height="2"/><rect x="648" y="119" width="1" height="2"/><rect x="658" y="114" width="1" height="7"/><rect x="667" y="119" width="1" height="2"/><rect x="677" y="119" width="1" height="2"/><rect x="687" y="119" width="1" height="2"/><rect x="696" y="119" width="1" height="2"/><rect x="706" y="118" width="1" height="3"/><rect x="716" y="119" width="1" height="2"/><rect x="725" y="119" width="1" height="2"/><rect x="735" y="119" width="1" height="2"/><rect x="745" y="119" width="1" height="2"/><rect x="755" y="114" width="1" height="7"/><rect x="764" y="119" width="1" height="2"/><rect x="774" y="119" width="1" height="2"/><rect x="784" y="119" width="1" height="2"/><rect x="793" y="119" width="1" height="2"/><rect x="803" y="118" width="1" height="3"/><rect x="813" y="119" width="1" height="2"/><rect x="822" y="119" width="1" height="2"/><rect x="832" y="119" width="1" height="2"/><rect x="842" y="119" width="1" height="2"/><rect x="852" y="114" width="1" height="7"/><rect x="861" y="119" width="1" height="2"/><rect x="871" y="119" width="1" height="2"/><rect x="881" y="119" width="1" height="2"/><rect x="890" y="119" width="1" height="2"/><rect x="900" y="118" width="1" height="3"/><rect x="910" y="119" width="1" height="2"/><rect x="919" y="119" width="1" height="2"/><rect x="929" y="119" width="1" height="2"/><rect x="939" y="119" width="1" height="2"/><rect x="949" y="114" width="1" height="7"/><rect x="958" y="119" width="1" height="2"/><rect x="968" y="119" width="1" height="2"/><rect x="978" y="119" width="1" height="2"/><rect x="987" y="119" width="1" height="2"/><rect x="997" y="118" width="1" height="3"/><rect x="1007" y="119" width="1" height="2"/><rect x="1016" y="119" width="1" height="2"/><rect x="1026" y="119" width="1" height="2"/><rect x="1036" y="119" width="1" height="2"/><rect x="1046" y="114" width="1" height="7"/><rect x="48" y="886" width="3" height="1"/><rect x="49" y="876" width="2" height="1"/><rect x="49" y="866" width="2" height="1"/><rect x="49" y="856" width="2" height="1"/><rect x="49" y="847" width="2" height="1"/><rect x="47" y="837" width="4" height="1"/><rect x="49" y="827" width="2" height="1"/><rect x="49" y="818" width="2" height="1"/><rect x="49" y="808" width="2" height="1"/><rect x="49" y="798" width="2" height="1"/><rect x="48" y="788" width="3" height="1"/><rect x="49" y="779" width="2" height="1"/><rect x="49" y="769" width="2" height="1"/><rect x="49" y="759" width="2" height="1"/><rect x="49" y="750" width="2" height="1"/><rect x="47" y="740" width="4" height="1"/><rect x="49" y="730" width="2" height="1"/><rect x="49" y="721" width="2" height="1"/><rect x="49" y="711" width="2" height="1"/><rect x="49" y="701" width="2" height="1"/><rect x="48" y="692" width="3" height="1"/><rect x="49" y="682" width="2" height="1"/><rect x="49" y="672" width="2" height="1"/><rect x="49" y="662" width="2" height="1"/><rect x="49" y="653" width="2" height="1"/><rect x="47" y="643" width="4" height="1"/><rect x="49" y="633" width="2" height="1"/><rect x="49" y="624" width="2" height="1"/><rect x="49" y="614" width="2" height="1"/><rect x="49" y="604" width="2" height="1"/><rect x="48" y="594" width="3" height="1"/><rect x="49" y="585" width="2" height="1"/><rect x="49" y="575" width="2" height="1"/><rect x="49" y="565" width="2" height="1"/><rect x="49" y="556" width="2" height="1"/><rect x="47" y="546" width="4" height="1"/><rect x="49" y="536" width="2" height="1"/><rect x="49" y="527" width="2" height="1"/><rect x="49" y="517" width="2" height="1"/><rect x="49" y="507" width="2" height="1"/><rect x="48" y="498" width="3" height="1"/><rect x="49" y="488" width="2" height="1"/><rect x="49" y="478" width="2" height="1"/><rect x="49" y="468" width="2" height="1"/><rect x="49" y="459" width="2" height="1"/><rect x="47" y="449" width="4" height="1"/><rect x="49" y="439" width="2" height="1"/><rect x="49" y="430" width="2" height="1"/><rect x="49" y="420" width="2" height="1"/><rect x="49" y="410" width="2" height="1"/><rect x="48" y="400" width="3" height="1"/><rect x="49" y="391" width="2" height="1"/><rect x="49" y="381" width="2" height="1"/><rect x="49" y="371" width="2" height="1"/><rect x="49" y="362" width="2" height="1"/><rect x="47" y="352" width="4" height="1"/><rect x="49" y="342" width="2" height="1"/><rect x="49" y="333" width="2" height="1"/><rect x="49" y="323" width="2" height="1"/><rect x="49" y="313" width="2" height="1"/><rect x="48" y="304" width="3" height="1"/><rect x="49" y="294" width="2" height="1"/><rect x="49" y="284" width="2" height="1"/><rect x="49" y="274" width="2" height="1"/><rect x="49" y="265" width="2" height="1"/><rect x="47" y="255" width="4" height="1"/><rect x="49" y="245" width="2" height="1"/><rect x="49" y="236" width="2" height="1"/><rect x="49" y="226" width="2" height="1"/><rect x="49" y="216" width="2" height="1"/><rect x="48" y="206" width="3" height="1"/><rect x="49" y="197" width="2" height="1"/><rect x="49" y="187" width="2" height="1"/><rect x="49" y="177" width="2" height="1"/><rect x="49" y="168" width="2" height="1"/><rect x="47" y="158" width="4" height="1"/><rect x="49" y="148" width="2" height="1"/><rect x="49" y="139" width="2" height="1"/><rect x="49" y="129" width="2" height="1"/><path d="M526.5 105V122" stroke="#000" stroke-dasharray="4 4"/><path d="M35 493.5H52" stroke="#000" stroke-dasharray="4 4"/></g></svg>
<div class="t" style="left:56px;top:104px;width:41px;text-align:center;font-size:10px;line-height:11px">150</div>
<div class="t" style="left:153px;top:104px;width:41px;text-align:center;font-size:10px;line-height:11px">100</div>
<div class="t" style="left:250px;top:104px;width:41px;text-align:center;font-size:10px;line-height:11px">50</div>
<div class="t" style="left:347px;top:104px;width:41px;text-align:center;font-size:10px;line-height:11px">0</div>
<div class="t" style="left:444px;top:104px;width:41px;text-align:center;font-size:10px;line-height:11px">50</div>
<div class="t" style="left:541px;top:104px;width:41px;text-align:center;font-size:10px;line-height:11px">100</div>
<div class="t" style="left:638px;top:104px;width:41px;text-align:center;font-size:10px;line-height:11px">150</div>
<div class="t" style="left:735px;top:104px;width:41px;text-align:center;font-size:10px;line-height:11px">200</div>
<div class="t" style="left:832px;top:104px;width:41px;text-align:center;font-size:10px;line-height:11px">250</div>
<div class="t" style="left:929px;top:104px;width:41px;text-align:center;font-size:10px;line-height:11px">300</div>
<div class="t" style="left:960px;top:104px;width:86px;text-align:right;font-size:10px;line-height:11px;letter-spacing:-0.2px">millimeters</div>
<div class="t" style="left:22px;top:735px;width:41px;text-align:center;font-size:10px;line-height:11px;transform:rotate(-90deg);transform-origin:20.5px 5.5px">0</div>
<div class="t" style="left:22px;top:638px;width:41px;text-align:center;font-size:10px;line-height:11px;transform:rotate(-90deg);transform-origin:20.5px 5.5px">50</div>
<div class="t" style="left:22px;top:541px;width:41px;text-align:center;font-size:10px;line-height:11px;transform:rotate(-90deg);transform-origin:20.5px 5.5px">100</div>
<div class="t" style="left:22px;top:444px;width:41px;text-align:center;font-size:10px;line-height:11px;transform:rotate(-90deg);transform-origin:20.5px 5.5px">150</div>
<div class="t" style="left:22px;top:347px;width:41px;text-align:center;font-size:10px;line-height:11px;transform:rotate(-90deg);transform-origin:20.5px 5.5px">200</div>
<div class="t" style="left:22px;top:250px;width:41px;text-align:center;font-size:10px;line-height:11px;transform:rotate(-90deg);transform-origin:20.5px 5.5px">250</div>
<div class="t" style="left:22px;top:153px;width:41px;text-align:center;font-size:10px;line-height:11px;transform:rotate(-90deg);transform-origin:20.5px 5.5px">300</div>
<div class="t" style="left:-2px;top:861px;width:90px;text-align:center;font-size:10px;line-height:11px;letter-spacing:-0.2px;transform:rotate(-90deg);transform-origin:45px 5.5px">millimeters</div>
<svg class="a" style="left:38px;top:109px;" width="12" height="12" viewBox="0 0 12 12" shape-rendering="crispEdges"><g fill="#000"><rect x="2" y="0" width="1" height="2"/><rect x="0" y="2" width="2" height="1"/><rect x="2" y="4" width="1" height="2"/><rect x="4" y="2" width="2" height="1"/><rect x="7" y="2" width="2" height="1"/><rect x="2" y="7" width="1" height="2"/></g><path d="M4 4L9.5 9.5" stroke="#000" shape-rendering="auto"/><path d="M10 10H6.5L10 6.5Z" fill="#000"/></svg>
<div class="a" style="left:786px;top:202px;width:6px;height:543px;background:#808080;"></div>
<div class="a" style="left:373px;top:741px;width:419px;height:4px;background:#808080;"></div>
<div class="a" style="left:367px;top:198px;width:419px;height:543px;border:1px solid #000;background:#fff"></div>
<svg class="a" style="left:0;top:0" width="1280" height="960"><ellipse cx="403" cy="246.6" rx="108" ry="93.3" fill="#EF3E00" stroke="#2B2425" stroke-width="20"/></svg>
<div class="a" style="left:1033px;top:123px;width:16px;height:753px;background-color:#fff;background-image:conic-gradient(#EFE7D2 25%,#fff 0 50%,#EFE7D2 0 75%,#fff 0);background-size:2px 2px"></div>
<div class="a" style="left:1033px;top:123px;width:16px;height:16px;background:#EFE7D2;box-shadow:inset -1px -1px #A9A18B"></div>
<svg class="a" style="left:1036px;top:128px;" width="9" height="5" viewBox="0 0 9 5" shape-rendering="crispEdges"><path d="M0 4.5H8L4 0.5Z" fill="#000" shape-rendering="auto"/></svg>
<div class="a" style="left:1033px;top:501px;width:16px;height:16px;background:#EFE7D2;box-shadow:inset -1px -1px #716F64,inset 1px 1px #fff,inset -2px -2px #A9A18B"></div>
<div class="a" style="left:1033px;top:860px;width:16px;height:16px;background:#EFE7D2;box-shadow:inset -1px -1px #A9A18B"></div>
<svg class="a" style="left:1037px;top:866px;" width="8" height="5" viewBox="0 0 8 5" shape-rendering="crispEdges"><path d="M0 0H7.5L3.75 4Z" fill="#000" shape-rendering="auto"/></svg>
<div class="a" style="left:53px;top:877px;width:491px;height:15px;background:#EFE7D2;"></div>
<div class="a" style="left:564px;top:876px;width:453px;height:16px;background-color:#fff;background-image:conic-gradient(#EFE7D2 25%,#fff 0 50%,#EFE7D2 0 75%,#fff 0);background-size:2px 2px"></div>
<div class="a" style="left:543px;top:876px;width:5px;height:16px;background:#F4F2E8;box-shadow:inset 1px 1px #716F64,inset -1px -1px #A9A18B,inset 2px 2px #fff"></div>
<div class="a" style="left:548px;top:876px;width:16px;height:16px;background:#EFE7D2;box-shadow:inset -1px -1px #A9A18B"></div>
<svg class="a" style="left:553px;top:880px;" width="5" height="8" viewBox="0 0 5 8" shape-rendering="crispEdges"><path d="M4.5 0V7.5L0.5 3.75Z" fill="#000" shape-rendering="auto"/></svg>
<div class="a" style="left:777px;top:876px;width:16px;height:16px;background:#EFE7D2;box-shadow:inset -1px -1px #716F64,inset 1px 1px #fff,inset -2px -2px #A9A18B"></div>
<div class="a" style="left:1017px;top:876px;width:16px;height:16px;background:#EFE7D2;box-shadow:inset -1px -1px #A9A18B"></div>
<svg class="a" style="left:1023px;top:880px;" width="5" height="8" viewBox="0 0 5 8" shape-rendering="crispEdges"><path d="M0.5 0V7.5L4.5 3.75Z" fill="#000" shape-rendering="auto"/></svg>
<div class="a" style="left:1033px;top:876px;width:16px;height:16px;background:#EFE7D2;box-shadow:inset -1px -1px #A9A18B,inset 1px 1px #fff"></div>
<svg class="a" style="left:56px;top:879px;" width="9" height="9" viewBox="0 0 9 9" shape-rendering="crispEdges"><rect x="0.5" y="0" width="1.5" height="9" fill="#000"/><path d="M8 0V9L3 4.5Z" fill="#000"/></svg>
<svg class="a" style="left:72px;top:879px;" width="9" height="9" viewBox="0 0 9 9" shape-rendering="crispEdges"><path d="M4.5 0.5V8.5M0.5 4.5H8.5" stroke="#000" stroke-width="2"/></svg>
<div class="t" style="left:101px;top:879px;font-size:12px;transform-origin:0 0;transform:scaleX(0.8991)">1 of 1</div>
<svg class="a" style="left:147px;top:879px;" width="9" height="9" viewBox="0 0 9 9" shape-rendering="crispEdges"><path d="M4.5 0.5V8.5M0.5 4.5H8.5" stroke="#000" stroke-width="2"/></svg>
<svg class="a" style="left:163px;top:879px;" width="9" height="9" viewBox="0 0 9 9" shape-rendering="crispEdges"><path d="M0.5 0V9L5.5 4.5Z" fill="#000"/><rect x="6.5" y="0" width="1.5" height="9" fill="#000"/></svg>
<svg class="a" style="left:0;top:0" width="1280" height="960"><path d="M176 876.5L183.5 890.5H239.5L247 876.5" fill="#fff" stroke="#000" stroke-width="1.2"/></svg>
<div class="a" style="left:176px;top:876px;width:71px;height:1px;background:#fff;"></div>
<div class="t" style="left:191px;top:877px;font-size:12px;font-weight:bold;letter-spacing:0.049px">Page 1</div>
<div class="a" style="left:1050px;top:103px;width:230px;height:1px;background:#fff;"></div>
<svg class="a" style="left:1059px;top:111px;" width="8" height="5" viewBox="0 0 8 5" shape-rendering="crispEdges"><path d="M0 0V5L3 2.5Z M4 0V5L7 2.5Z" fill="#000"/></svg>
<div class="a" style="left:1073px;top:111px;width:145px;height:1px;background:#fff;"></div>
<div class="a" style="left:1073px;top:112px;width:145px;height:1px;background:#A9A18B;"></div>
<div class="a" style="left:1073px;top:114px;width:145px;height:1px;background:#fff;"></div>
<div class="a" style="left:1073px;top:115px;width:145px;height:1px;background:#A9A18B;"></div>
<svg class="a" style="left:1222px;top:110px;" width="9" height="8" viewBox="0 0 9 8" shape-rendering="crispEdges"><path d="M0.8 0.8L8.2 7.2M8.2 0.8L0.8 7.2" stroke="#000" stroke-width="1.6" shape-rendering="auto"/></svg>
<div class="a" style="left:1235px;top:106px;width:1px;height:15px;background:#A9A18B;"></div>
<div class="a" style="left:1236px;top:106px;width:1px;height:15px;background:#fff;"></div>
<svg class="a" style="left:1241px;top:110px;" width="11" height="9" viewBox="0 0 11 9" shape-rendering="crispEdges"><path d="M2.8 1.8L10.2 8.2M10.2 1.8L2.8 8.2" stroke="#A9A18B" stroke-width="1.6" shape-rendering="auto"/><path d="M0.8 0.8L8.2 7.2M8.2 0.8L0.8 7.2" stroke="#000" stroke-width="1.6" shape-rendering="auto"/></svg>
<div class="a" style="left:1055px;top:124px;width:177px;height:1px;background:#fff;"></div>
<div class="a" style="left:1055px;top:124px;width:1px;height:768px;background:#fff;"></div>
<div class="a" style="left:1231px;top:124px;width:1px;height:125px;background:#A9A18B;"></div>
<div class="a" style="left:1231px;top:328px;width:1px;height:563px;background:#A9A18B;"></div>
<div class="a" style="left:1056px;top:891px;width:176px;height:1px;background:#A9A18B;"></div>
<div class="a" style="left:1051px;top:892px;width:206px;height:1px;background:#A9A18B;"></div>
<div class="a" style="left:1064px;top:133px;width:24px;height:23px;background-color:#fff;background-image:conic-gradient(#EFE7D2 25%,#fff 0 50%,#EFE7D2 0 75%,#fff 0);background-size:2px 2px;box-shadow:inset 1px 1px #A9A18B,inset -1px -1px #fff"></div>
<div class="a" style="left:1092px;top:133px;width:24px;height:23px;background:#EFE7D2;box-shadow:inset -1px -1px #A9A18B,inset 1px 1px #fff;"></div>
<div class="a" style="left:1121px;top:133px;width:24px;height:23px;background:#EFE7D2;box-shadow:inset -1px -1px #A9A18B,inset 1px 1px #fff;"></div>
<svg class="a" style="left:1068px;top:136px;" width="14" height="14" viewBox="0 0 14 14" shape-rendering="crispEdges"><path d="M0.75 0.75H9.25V4.75H13.25V13.25H4.75V9.25H0.75Z" fill="#fff" stroke="#000" stroke-width="1.5"/><circle cx="7" cy="7" r="3" fill="none" stroke="#A9A18B" stroke-dasharray="1 1.3" shape-rendering="auto"/></svg>
<svg class="a" style="left:1095px;top:135px;" width="17" height="17" viewBox="0 0 17 17" shape-rendering="crispEdges"><rect x="0.75" y="0.75" width="9" height="9" fill="#fff" stroke="#000" stroke-width="1.5"/><path d="M6.75 15.25V10.75H10.75V6.75H15.25V15.25Z" fill="#fff" stroke="#000" stroke-width="1.5"/></svg>
<svg class="a" style="left:1125px;top:136px;" width="15" height="15" viewBox="0 0 15 15" shape-rendering="crispEdges"><rect x="0.75" y="0.75" width="9" height="9" fill="#fff" stroke="#000" stroke-width="1.5"/><rect x="4.75" y="4.75" width="9" height="9" fill="#fff" stroke="#000" stroke-width="1.5"/><rect x="4" y="4" width="6" height="6" fill="#000"/></svg>
<div class="a" style="left:1062px;top:161px;width:169px;height:1px;background:#A9A18B;"></div>
<div class="a" style="left:1062px;top:162px;width:169px;height:1px;background:#fff;"></div>
<div class="t" style="left:1067px;top:170px;font-size:11px;letter-spacing:0.016px">Weld:</div>
<div class="a" style="left:1082px;top:188px;width:135px;height:65px;background:#fff;box-shadow:inset 1px 1px #A9A18B,inset -1px -1px #fff,inset 2px 2px #716F64,inset -2px -2px #EFE7D2"></div>
<svg class="a" style="left:1118px;top:201px;" width="61" height="42" viewBox="0 0 61 42" shape-rendering="crispEdges"><path d="M13 0.6H60V30H19.8L14.2 41L0.7 13.7H13Z" fill="#000" shape-rendering="auto"/></svg>
<div class="t" style="left:1082px;top:258px;font-size:11px;letter-spacing:-0.167px">Leave Original:</div>
<div class="a" style="left:1082px;top:280px;width:13px;height:13px;background:#fff;box-shadow:inset 1px 1px #EFE7D2,inset -1px -1px #EFE7D2"></div>
<div class="a" style="left:1082px;top:299px;width:13px;height:13px;background:#fff;box-shadow:inset 1px 1px #EFE7D2,inset -1px -1px #EFE7D2"></div>
<div class="t" style="left:1100px;top:279px;font-size:11px;letter-spacing:-0.096px">Source Object(s)</div>
<div class="t" style="left:1100px;top:298px;font-size:11px;letter-spacing:-0.016px">Target Object(s)</div>
<div class="a" style="left:1082px;top:318px;width:135px;height:23px;background:#EFE7D2;box-shadow:inset -1px -1px #A9A18B,inset 1px 1px #fff;"></div>
<div class="t" style="left:1082px;top:323px;width:135px;text-align:center;color:#A9A18B;text-shadow:1px 1px #fff;letter-spacing:-0.3px">Weld To...</div>
<div class="a" style="left:1232px;top:126px;width:22px;height:123px;background:#EFE7D2;box-shadow:inset -1px 0 #A9A18B,inset 0 1px #fff,inset 1px 0 #EFE7D2"></div>
<div class="a" style="left:1232px;top:249px;width:24px;height:79px;background:#EFE7D2;box-shadow:inset -1px 0 #A9A18B,inset 0 1px #fff,inset 0 -1px #A9A18B"></div>
<div class="a" style="left:1231px;top:250px;width:1px;height:77px;background:#EFE7D2;"></div>
<div class="a" style="left:1232px;top:328px;width:24px;height:564px;background:#EFE7D2;box-shadow:inset -1px 0 #A9A18B,inset 0 1px #fff"></div>
<div class="a" style="left:1235px;top:130px;width:16px;height:1px;background:#fff;"></div>
<div class="a" style="left:1235px;top:131px;width:16px;height:1px;background:#A9A18B;"></div>
<div class="a" style="left:1235px;top:133px;width:16px;height:1px;background:#fff;"></div>
<div class="a" style="left:1235px;top:134px;width:16px;height:1px;background:#A9A18B;"></div>
<div class="a" style="left:1235px;top:251px;width:16px;height:1px;background:#fff;"></div>
<div class="a" style="left:1235px;top:252px;width:16px;height:1px;background:#A9A18B;"></div>
<div class="a" style="left:1235px;top:254px;width:16px;height:1px;background:#fff;"></div>
<div class="a" style="left:1235px;top:255px;width:16px;height:1px;background:#A9A18B;"></div>
<svg class="a" style="left:1235px;top:137px;" width="16" height="16" viewBox="0 0 16 16" shape-rendering="crispEdges"><rect x="0.5" y="0.5" width="15" height="15" fill="#FFF8E0" stroke="#000"/><rect x="1" y="1" width="8" height="2" fill="#0000A0"/><rect x="1" y="3" width="14" height="1" fill="#000"/><rect x="3.5" y="6.5" width="9" height="6" fill="#fff" stroke="#000" stroke-width="1.3"/><path d="M6 8V11L8.5 9.5Z" fill="#000"/></svg>
<svg class="a" style="left:1235px;top:262px;" width="16" height="16" viewBox="0 0 16 16" shape-rendering="crispEdges"><rect x="0.5" y="0.5" width="15" height="15" fill="#FFF8E0" stroke="#000"/><rect x="1" y="1" width="8" height="2" fill="#0000A0"/><rect x="1" y="3" width="14" height="1" fill="#000"/><rect x="3.5" y="5.5" width="6" height="6" fill="#fff" stroke="#000"/><rect x="6.5" y="8.5" width="6" height="5" fill="#fff" stroke="#000"/><rect x="6" y="8" width="4" height="4" fill="#000"/></svg>
<div class="t" style="left:1199px;top:194px;width:88px;font-size:11px;transform:rotate(90deg);transform-origin:44px 6.5px;text-align:center;letter-spacing:-0.3px">Bitmap Color Mask</div>
<div class="t" style="left:1199px;top:294px;width:88px;font-size:11px;transform:rotate(90deg);transform-origin:44px 6.5px;text-align:center;letter-spacing:-0.1px">Shaping</div>
<div class="a" style="left:1256px;top:103px;width:1px;height:789px;background:#A9A18B;"></div>
<div class="a" style="left:1257px;top:103px;width:1px;height:789px;background:#fff;"></div>
<svg class="a" style="left:1264px;top:110px;" width="10" height="6" viewBox="0 0 10 6" shape-rendering="crispEdges"><path d="M0 5H9L4.5 0.5Z" fill="#A9A18B"/></svg>
<div class="a" style="left:1260px;top:121px;width:18px;height:18px;border:1px dotted #9A9A9A;background:#fff"></div>
<svg class="a" style="left:1261px;top:122px;" width="16" height="16" viewBox="0 0 16 16" shape-rendering="crispEdges"><rect x="0.5" y="0.5" width="15" height="15" fill="#fff" stroke="#000" stroke-width="1.6"/><path d="M1.5 1.5L14.5 14.5M14.5 1.5L1.5 14.5" stroke="#000" stroke-width="0.9" shape-rendering="auto"/></svg>
<div class="a" style="left:1260px;top:139px;width:18px;height:714px;background:#000;"></div>
<div class="a" style="left:1261px;top:140px;width:16px;height:16px;background:#2A2324;"></div>
<div class="a" style="left:1261px;top:157px;width:16px;height:16px;background:#3D383A;"></div>
<div class="a" style="left:1261px;top:174px;width:16px;height:16px;background:#4F4A4C;"></div>
<div class="a" style="left:1261px;top:191px;width:16px;height:16px;background:#5E5A5C;"></div>
<div class="a" style="left:1261px;top:208px;width:16px;height:16px;background:#6D696B;"></div>
<div class="a" style="left:1261px;top:225px;width:16px;height:16px;background:#7C787A;"></div>
<div class="a" style="left:1261px;top:242px;width:16px;height:16px;background:#8C888A;"></div>
<div class="a" style="left:1261px;top:259px;width:16px;height:16px;background:#A09C9E;"></div>
<div class="a" style="left:1261px;top:276px;width:16px;height:16px;background:#B8B4B6;"></div>
<div class="a" style="left:1261px;top:293px;width:16px;height:16px;background:#D8D6D8;"></div>
<div class="a" style="left:1261px;top:310px;width:16px;height:16px;background:#FFFFFF;"></div>
<div class="a" style="left:1261px;top:327px;width:16px;height:16px;background:#3A1A80;"></div>
<div class="a" style="left:1261px;top:344px;width:16px;height:16px;background:#0A8FE0;"></div>
<div class="a" style="left:1261px;top:361px;width:16px;height:16px;background:#0A9458;"></div>
<div class="a" style="left:1261px;top:378px;width:16px;height:16px;background:#FFF000;"></div>
<div class="a" style="left:1261px;top:395px;width:16px;height:16px;background:#F03C00;"></div>
<div class="a" style="left:1261px;top:412px;width:16px;height:16px;background:#EC2A7C;"></div>
<div class="a" style="left:1261px;top:429px;width:16px;height:16px;background:#A54479;"></div>
<div class="a" style="left:1261px;top:446px;width:16px;height:16px;background:#F8800A;"></div>
<div class="a" style="left:1261px;top:463px;width:16px;height:16px;background:#FFA0A0;"></div>
<div class="a" style="left:1261px;top:480px;width:16px;height:16px;background:#75686A;"></div>
<div class="a" style="left:1261px;top:497px;width:16px;height:16px;background:#C0B0D8;"></div>
<div class="a" style="left:1261px;top:514px;width:16px;height:16px;background:#9080C0;"></div>
<div class="a" style="left:1261px;top:531px;width:16px;height:16px;background:#6878B8;"></div>
<div class="a" style="left:1261px;top:548px;width:16px;height:16px;background:#7858A0;"></div>
<div class="a" style="left:1261px;top:565px;width:16px;height:16px;background:#887498;"></div>
<div class="a" style="left:1261px;top:582px;width:16px;height:16px;background:#555A80;"></div>
<div class="a" style="left:1261px;top:599px;width:16px;height:16px;background:#4F4860;"></div>
<div class="a" style="left:1261px;top:616px;width:16px;height:16px;background:#5E6E88;"></div>
<div class="a" style="left:1261px;top:633px;width:16px;height:16px;background:#0A70C8;"></div>
<div class="a" style="left:1261px;top:650px;width:16px;height:16px;background:#58B8F0;"></div>
<div class="a" style="left:1261px;top:667px;width:16px;height:16px;background:#98A8B8;"></div>
<div class="a" style="left:1261px;top:684px;width:16px;height:16px;background:#7A8490;"></div>
<div class="a" style="left:1261px;top:701px;width:16px;height:16px;background:#686C78;"></div>
<div class="a" style="left:1261px;top:718px;width:16px;height:16px;background:#48484F;"></div>
<div class="a" style="left:1261px;top:735px;width:16px;height:16px;background:#4A6268;"></div>
<div class="a" style="left:1261px;top:752px;width:16px;height:16px;background:#307870;"></div>
<div class="a" style="left:1261px;top:769px;width:16px;height:16px;background:#5A7C7C;"></div>
<div class="a" style="left:1261px;top:786px;width:16px;height:16px;background:#20908A;"></div>
<div class="a" style="left:1261px;top:803px;width:16px;height:16px;background:#2A9070;"></div>
<div class="a" style="left:1261px;top:820px;width:16px;height:16px;background:#10B0D0;"></div>
<div class="a" style="left:1261px;top:837px;width:16px;height:16px;background:#2890A0;"></div>
<svg class="a" style="left:1264px;top:858px;" width="10" height="6" viewBox="0 0 10 6" shape-rendering="crispEdges"><path d="M0 0H9L4.5 5Z" fill="#000"/></svg>
<svg class="a" style="left:1264px;top:874px;" width="9" height="10" viewBox="0 0 9 10" shape-rendering="crispEdges"><rect x="0" y="0" width="1.5" height="9" fill="#000"/><path d="M8 0V9L3 4.5Z" fill="#000"/></svg>
<div class="a" style="left:0px;top:893px;width:1280px;height:1px;background:#fff;"></div>
<div class="t" style="left:33px;top:917px;font-size:12px;letter-spacing:-0.549px">( 81,670; 127,333 )</div>
<div class="t" style="left:1076px;top:898px;font-size:11.5px;letter-spacing:0.222px">Fill:</div>
<div class="t" style="left:1076px;top:916px;font-size:11.5px;letter-spacing:-0.705px">Outline:</div>
<div class="a" style="left:1240px;top:898px;width:30px;height:13px;background:#fff;"></div>
<svg class="a" style="left:1240px;top:898px;" width="30" height="13" viewBox="0 0 30 13" shape-rendering="crispEdges"><path d="M6 2.5L24 10.5M24 2.5L6 10.5" stroke="#000" shape-rendering="auto" stroke-width="0.9"/></svg>
<div class="a" style="left:1240px;top:916px;width:30px;height:13px;background:#fff;"></div>
<svg class="a" style="left:1240px;top:916px;" width="30" height="13" viewBox="0 0 30 13" shape-rendering="crispEdges"><path d="M6 2.5L24 10.5M24 2.5L6 10.5" stroke="#000" shape-rendering="auto" stroke-width="0.9"/></svg>
<div class="a" style="left:0px;top:932px;width:1280px;height:1px;background:#EFE7D2;"></div>
<div class="a" style="left:0px;top:933px;width:1280px;height:1px;background:#fff;"></div>
<div class="a" style="left:2px;top:936px;width:55px;height:22px;background:#EFE7D2;box-shadow:inset -1px -1px #716F64,inset 1px 1px #fff,inset -2px -2px #A9A18B;"></div>
<svg class="a" style="left:5px;top:939px;" width="18" height="16" viewBox="0 0 18 16" shape-rendering="crispEdges"><path d="M7.5 2Q10 0.5 12 1.5Q14.5 0.5 17 1.5V14Q14.5 13 12 14Q10 13 7.5 14.5Z" fill="#000"/><path d="M9 3.5L11 2.5V7L9 7.5Z" fill="#F02020"/><path d="M13 2.5L15.5 2.5V6.5L13 6Z" fill="#20D020"/><path d="M9 8.5L11 8V12.5L9 13Z" fill="#2020F0"/><path d="M13 8L15.5 8.5V12L13 12.5Z" fill="#F0F020"/><g fill="#000"><rect x="1" y="2" width="1" height="1"/><rect x="3" y="3" width="4" height="1"/><rect x="1" y="12" width="1" height="1"/><rect x="3" y="12" width="4" height="1"/></g><g fill="#F02020"><rect x="1" y="6" width="1" height="2"/><rect x="3" y="6" width="4" height="2"/></g><g fill="#2020F0"><rect x="1" y="9" width="1" height="2"/><rect x="3" y="9" width="4" height="2"/></g><g fill="#000"><rect x="2" y="5" width="5" height="1"/><rect x="2" y="8" width="5" height="1"/><rect x="2" y="11" width="5" height="1"/></g></svg>
<div class="t" style="left:23px;top:940px;font-size:12px;font-weight:bold;line-height:14px;letter-spacing:0.331px">Start</div>
<div class="a" style="left:58px;top:936px;width:1px;height:22px;background:#A9A18B;"></div>
<div class="a" style="left:59px;top:936px;width:1px;height:22px;background:#fff;"></div>
<div class="a" style="left:62px;top:937px;width:1px;height:20px;background:#fff;"></div>
<div class="a" style="left:63px;top:937px;width:1px;height:20px;background:#A9A18B;"></div>
<svg class="a" style="left:73px;top:938px;" width="17" height="17" viewBox="0 0 17 17" shape-rendering="crispEdges"><rect x="0" y="1" width="16" height="15" fill="#2070C0"/><circle cx="8" cy="9" r="6.5" fill="#E8E0C0" shape-rendering="auto"/><rect x="5.5" y="7.5" width="6" height="7" fill="#fff" stroke="#000"/><path d="M8 11L14 3" stroke="#F0A000" stroke-width="2.5"/><path d="M13.5 2L15.5 4" stroke="#E02000" stroke-width="1.8"/><rect x="0" y="15" width="16" height="1.5" fill="#000"/></svg>
<svg class="a" style="left:96px;top:938px;" width="17" height="17" viewBox="0 0 17 17" shape-rendering="crispEdges"><g shape-rendering="auto"><path d="M13.5 11.5Q12 14.5 8.5 14.5Q4 14.5 4 9.5Q4 4 8.5 4Q13 4 13 9H5" fill="none" stroke="#1878E0" stroke-width="2.2"/><path d="M1.5 15Q0 11 5 6Q11 1 15 1.5Q17 3 14 6" fill="none" stroke="#48A8F0" stroke-width="1.2"/></g></svg>
<svg class="a" style="left:119px;top:938px;" width="17" height="17" viewBox="0 0 17 17" shape-rendering="crispEdges"><g shape-rendering="auto"><rect x="3" y="3" width="11" height="10" fill="#fff" stroke="#3068C0"/><path d="M2 8Q2 1 10 2L9 0L14 3L9 6L10 4Q4 4 4 8Z" fill="#2880E0"/><path d="M15 9Q15 16 7 15L8 17L3 14L8 11L7 13Q13 13 13 9Z" fill="#2880E0"/></g></svg>
<svg class="a" style="left:142px;top:938px;" width="17" height="17" viewBox="0 0 17 17" shape-rendering="crispEdges"><g shape-rendering="auto"><circle cx="8.5" cy="8.5" r="7.5" fill="#F08010"/><circle cx="9.5" cy="7.5" r="4.8" fill="#3050B0"/><path d="M1.5 6Q3 1 8 1Q4 3 5 6Q7 5 8 7Q5 9 6 12Q9 15 15 11Q13 16 8.5 16Q1 16 1.5 6Z" fill="#E86010"/></g></svg>
<svg class="a" style="left:165px;top:938px;" width="17" height="17" viewBox="0 0 17 17" shape-rendering="crispEdges"><rect x="6.5" y="0.5" width="9" height="7" fill="#4878D0" stroke="#000"/><rect x="0.5" y="8.5" width="9" height="6" fill="#D0D0D0" stroke="#000"/><path d="M3 15H13" stroke="#000" stroke-width="2"/><path d="M4 7L12 10" stroke="#E0C000" stroke-width="2"/><rect x="2" y="10" width="6" height="3" fill="#fff"/></svg>
<svg class="a" style="left:188px;top:938px;" width="17" height="17" viewBox="0 0 17 17" shape-rendering="crispEdges"><g shape-rendering="auto"><path d="M1 12Q6 6 16 5L14 8Q10 9 8 13Q4 14 1 12Z" fill="#404040"/><path d="M3 11Q6 9 9 10" stroke="#C0C0C0" fill="none"/><ellipse cx="6" cy="11" rx="2" ry="1.5" fill="#202020"/></g></svg>
<svg class="a" style="left:211px;top:938px;" width="17" height="17" viewBox="0 0 17 17" shape-rendering="crispEdges"><g shape-rendering="auto"><path d="M2 9L9 2L15 8L8 15Z" fill="#F0A020" stroke="#404040" stroke-width="1.2"/><path d="M4 9L9 4M7 12L13 7" stroke="#fff" stroke-width="1"/><path d="M5 10L12 6" stroke="#D06000" stroke-width="1.5"/></g></svg>
<svg class="a" style="left:234px;top:938px;" width="17" height="17" viewBox="0 0 17 17" shape-rendering="crispEdges"><rect x="0" y="0" width="17" height="17" fill="#10309A"/><rect x="1" y="1" width="15" height="7" fill="#2048B8"/><text x="8.5" y="7.5" font-size="7" font-weight="bold" fill="#fff" text-anchor="middle" font-family="Liberation Sans">DEV</text><text x="8.5" y="15" font-size="7" font-weight="bold" fill="#80A0F0" text-anchor="middle" font-family="Liberation Sans">C++</text></svg>
<svg class="a" style="left:257px;top:938px;" width="17" height="17" viewBox="0 0 17 17" shape-rendering="crispEdges"><rect x="0" y="0" width="17" height="17" fill="#F0A030"/><text x="8.5" y="13" font-size="12" font-weight="bold" fill="#fff" text-anchor="middle" font-family="Liberation Sans">m</text></svg>
<div class="a" style="left:313px;top:936px;width:1px;height:22px;background:#A9A18B;"></div>
<div class="a" style="left:314px;top:936px;width:1px;height:22px;background:#fff;"></div>
<div class="a" style="left:317px;top:937px;width:1px;height:20px;background:#fff;"></div>
<div class="a" style="left:318px;top:937px;width:1px;height:20px;background:#A9A18B;"></div>
<div class="a" style="left:325px;top:936px;width:160px;height:22px;background:#EFE7D2;box-shadow:inset -1px -1px #716F64,inset 1px 1px #fff,inset -2px -2px #A9A18B;"></div>
<svg class="a" style="left:329px;top:940px" width="16" height="16"><rect x="0.5" y="4.5" width="15" height="8" rx="1" fill="#C0C0C0" stroke="#404040"/><rect x="3" y="7" width="8" height="2" fill="#fff"/><rect x="3" y="7" width="2" height="1" fill="#E02020"/></svg>
<div class="t" style="left:346px;top:940px;font-size:11px;line-height:14px;letter-spacing:-0.031px">Dysk wymienny (F:)</div>
<div class="a" style="left:488px;top:936px;width:160px;height:22px;background:#EFE7D2;box-shadow:inset -1px -1px #716F64,inset 1px 1px #fff,inset -2px -2px #A9A18B;"></div>
<svg class="a" style="left:492px;top:939px" width="17" height="17"><g shape-rendering="auto"><circle cx="8.5" cy="8.5" r="7.5" fill="#2850A8"/><path d="M1 8.5A7.5 7.5 0 0 0 16 8.5Q15 2 9 3Q12 6 9 8Q5 8 4 4Q1 6 1 8.5Z" fill="#F08010"/></g></svg>
<div class="t" style="left:509px;top:940px;font-size:11px;line-height:14px;letter-spacing:-0.222px">Corel FORUM :: Napisz no...</div>
<div class="a" style="left:651px;top:936px;width:160px;height:22px;background:#EFE7D2;box-shadow:inset -1px -1px #716F64,inset 1px 1px #fff,inset -2px -2px #A9A18B;"></div>
<svg class="a" style="left:655px;top:939px" width="17" height="17"><path d="M0.5 5.5H6L7 4H15.5V15.5H0.5Z" fill="#F0D070" stroke="#A08030"/><rect x="4.5" y="1.5" width="9" height="10" fill="#fff" stroke="#6080C0"/><path d="M6 4H12M6 6H12M6 8H12" stroke="#90A8D8"/><path d="M0.5 8.5H15.5V15.5H0.5Z" fill="#F8D880" stroke="#A08030"/></svg>
<div class="t" style="left:672px;top:940px;font-size:11px;line-height:14px;letter-spacing:-0.123px">Moje dokumenty</div>
<div class="a" style="left:814px;top:936px;width:160px;height:22px;background-color:#fff;background-image:conic-gradient(#EFE7D2 25%,#fff 0 50%,#EFE7D2 0 75%,#fff 0);background-size:2px 2px;box-shadow:inset 1px 1px #716F64,inset -1px -1px #fff,inset 2px 2px #A9A18B"></div>
<svg class="a" style="left:818px;top:939px" width="17" height="17"><g shape-rendering="auto"><circle cx="8.5" cy="8.5" r="7.5" fill="#208850" stroke="#106030"/><path d="M4 12Q3 6 9 3L14 2Q13 9 8 12Z" fill="#F0E070"/><path d="M9 3L14 2L12 8Z" fill="#F07020"/></g></svg>
<div class="t" style="left:836px;top:941px;font-size:11px;line-height:14px;font-weight:bold;letter-spacing:0.335px">CorelDRAW 9 - [Graphi...</div>
<div class="a" style="left:1085px;top:936px;width:1px;height:22px;background:#A9A18B;"></div>
<div class="a" style="left:1086px;top:936px;width:1px;height:22px;background:#fff;"></div>
<div class="a" style="left:1088px;top:936px;width:190px;height:22px;box-shadow:inset 1px 1px #A9A18B,inset -1px -1px #fff"></div>
<svg class="a" style="left:1091px;top:939px;" width="16" height="16" viewBox="0 0 16 16" shape-rendering="crispEdges"><rect x="0.5" y="0.5" width="11" height="9" fill="#fff" stroke="#000"/><rect x="1" y="1" width="10" height="2" fill="#3050C0"/><circle cx="11.5" cy="11.5" r="4.5" fill="#fff" stroke="#E02020" stroke-width="2" shape-rendering="auto"/><path d="M11.5 9V11.5H13.5" stroke="#000"/></svg>
<svg class="a" style="left:1108px;top:939px;" width="16" height="16" viewBox="0 0 16 16" shape-rendering="crispEdges"><rect x="0" y="0" width="16" height="16" fill="#108080"/><text x="8" y="12.5" font-size="11" fill="#fff" text-anchor="middle" font-family="Liberation Sans">Pl</text></svg>
<svg class="a" style="left:1125px;top:939px;" width="16" height="16" viewBox="0 0 16 16" shape-rendering="crispEdges"><path d="M0 11L8 7L16 11L8 15Z" fill="#B0B0B0" stroke="#404040"/><path d="M2 7L10 2" stroke="#20A020" stroke-width="2.5"/><path d="M2 3V8H7" fill="none" stroke="#20A020" stroke-width="1.5"/></svg>
<svg class="a" style="left:1142px;top:939px;" width="16" height="16" viewBox="0 0 16 16" shape-rendering="crispEdges"><g shape-rendering="auto"><path d="M1 6H4L9 1V15L4 10H1Z" fill="#F0E060" stroke="#606020"/><path d="M11 4L14 2M11 8H15M11 12L14 14" stroke="#A0A0A0"/></g></svg>
<svg class="a" style="left:1159px;top:939px;" width="16" height="16" viewBox="0 0 16 16" shape-rendering="crispEdges"><rect x="3.5" y="2.5" width="11" height="12" fill="#C8C8C8" stroke="#404040"/><rect x="6" y="5" width="6" height="6" fill="#909090"/><path d="M0 5H3M0 9H3M1 13H3" stroke="#404040"/></svg>
<svg class="a" style="left:1176px;top:939px;" width="16" height="16" viewBox="0 0 16 16" shape-rendering="crispEdges"><g shape-rendering="auto"><path d="M2 9L9 2L15 8L8 15Z" fill="#F0A020" stroke="#404040" stroke-width="1.2"/><path d="M5 10L12 6" stroke="#D06000" stroke-width="1.5"/></g></svg>
<svg class="a" style="left:1193px;top:939px;" width="16" height="16" viewBox="0 0 16 16" shape-rendering="crispEdges"><rect x="0" y="0" width="16" height="16" fill="#D8E8F0"/><circle cx="3" cy="3" r="2" fill="#E02020"/><path d="M1 9Q8 7 15 13M3 6Q10 5 15 10" stroke="#2070D0" stroke-width="1.5" fill="none" shape-rendering="auto"/></svg>
<svg class="a" style="left:1210px;top:939px;" width="16" height="16" viewBox="0 0 16 16" shape-rendering="crispEdges"><g shape-rendering="auto"><path d="M8 0V16M0 8H16M2 2L14 14M14 2L2 14" stroke="#E02020" stroke-width="1.5"/><circle cx="8" cy="8" r="5.5" fill="#F0E020" stroke="#C08000"/><circle cx="6" cy="7" r="0.8" fill="#000"/><circle cx="10" cy="7" r="0.8" fill="#000"/><path d="M5.5 9.5Q8 12 10.5 9.5" stroke="#000" fill="none"/></g></svg>
<div class="t" style="left:1237px;top:941px;font-size:11px;line-height:14px;letter-spacing:0.094px">09:50</div>
</body></html>
